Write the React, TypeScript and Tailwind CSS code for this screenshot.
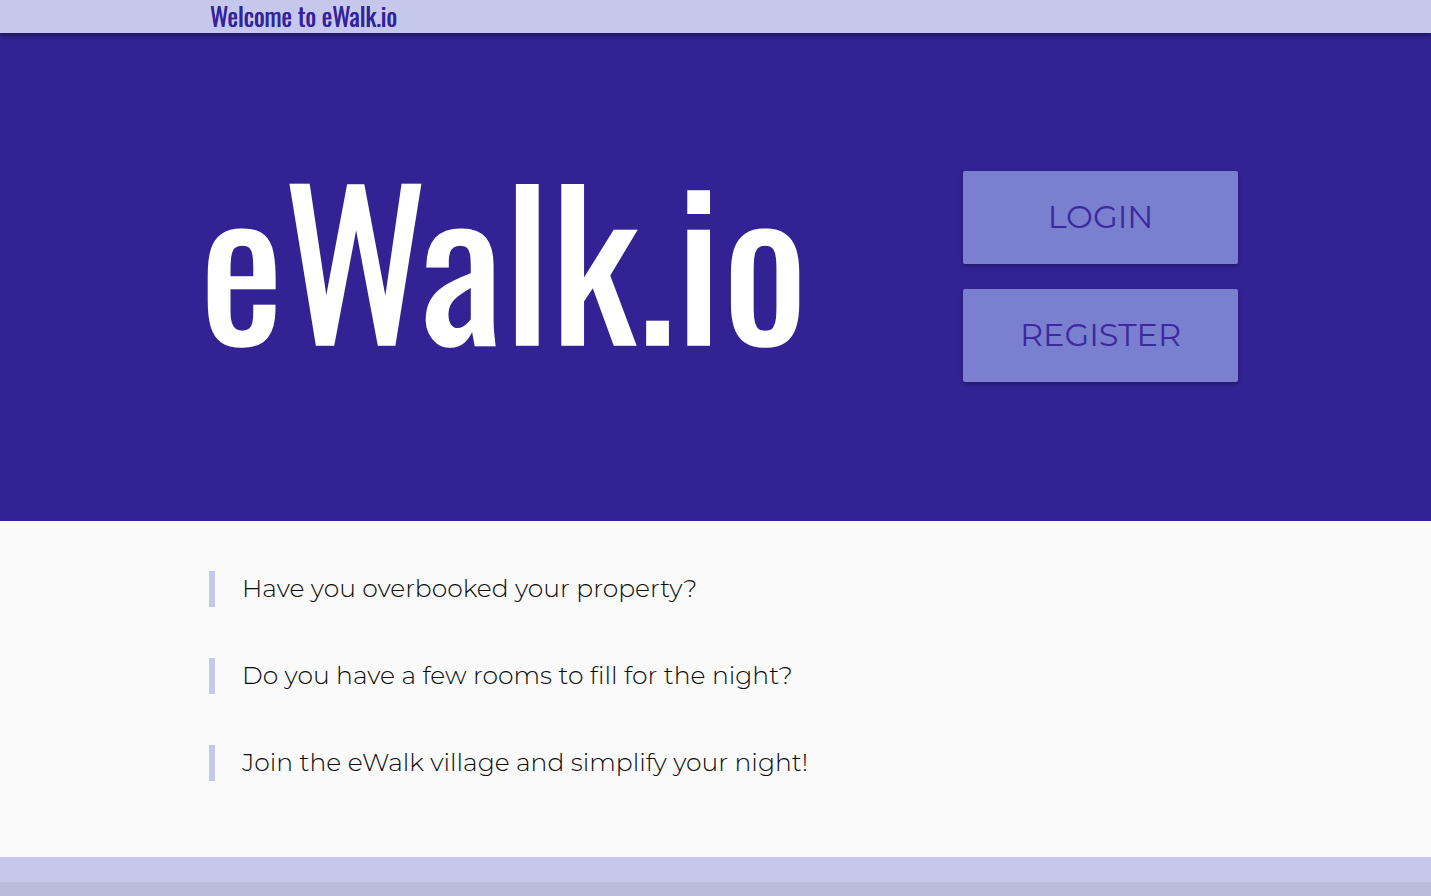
const lines = [
  "Have you overbooked your property?",
  "Do you have a few rooms to fill for the night?",
  "Join the eWalk village and simplify your night!",
]

export default function App() {
  return (
    <div className="min-h-screen bg-[#fafafa] flex flex-col font-['Montserrat',sans-serif]">
      {/* Top bar */}
      <header className="relative z-10 h-[33px] bg-[#c5c8ea] pl-[210px] shadow-[0_2px_6px_rgba(0,0,0,0.45)]">
        <span className="font-['Oswald',sans-serif] text-[25px] leading-[31px] text-[#34239a] [text-shadow:0_0_0.4px_#34239a]">
          Welcome to eWalk.io
        </span>
      </header>

      {/* Hero */}
      <section className="h-[488px] bg-[#332293] flex items-center justify-between pl-[200px] pr-[193px]">
        <h1 className="font-['Oswald',sans-serif] text-[198px] leading-none tracking-[1.5px] text-white pb-[42px] [-webkit-text-stroke:1.5px_white]">
          eWalk.io
        </h1>
        <div className="flex flex-col gap-[25px] pb-[2px]">
          <button className="w-[275px] h-[93px] rounded-[2px] bg-[#7b7fd0] text-[32px] text-[#3a2a9c] shadow-[0_2px_4px_rgba(0,0,0,0.3)]">
            LOGIN
          </button>
          <button className="w-[275px] h-[93px] rounded-[2px] bg-[#7b7fd0] text-[32px] text-[#3a2a9c] shadow-[0_2px_4px_rgba(0,0,0,0.3)]">
            REGISTER
          </button>
        </div>
      </section>

      {/* Questions */}
      <main className="pl-[209px] pt-[50px] pb-[76px] flex flex-col gap-[51px]">
        {lines.map((line) => (
          <div key={line} className="flex items-center h-[36px]">
            <div className="w-[6px] h-[36px] bg-[#c5c8ea]" />
            <p className="pl-[27px] text-[25px] font-light text-[#0a0a0a]">{line}</p>
          </div>
        ))}
      </main>

      {/* Footer */}
      <footer className="h-[25px] bg-[#c5c8ea]" />
      <div className="h-[14px] bg-[#b9bcdc]" />
    </div>
  )
}
